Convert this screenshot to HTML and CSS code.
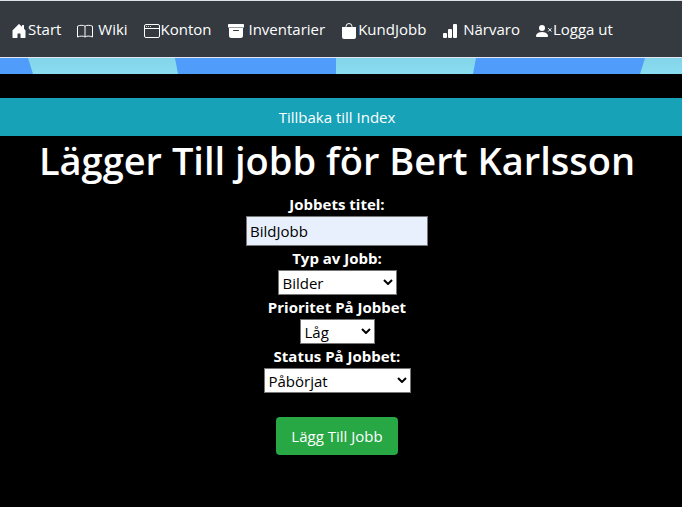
FILE: index.html
```html
<!DOCTYPE html>
<html lang="sv">
<head>
<meta charset="utf-8">
<meta name="viewport" content="width=device-width, initial-scale=1">
<title>Lägg till jobb</title>
<link rel="stylesheet" href="styles.css">
</head>
<body>
<nav class="navbar">
  <a class="nav-link" href="#"><svg class="icon" viewBox="0 0 16 16" aria-hidden="true"><path d="M6.5 14.5V11c0-.3.2-.5.5-.5h2c.3 0 .5.2.5.5v3.500c0 .3.2.5.5.5h4c.3 0 .5-.2.5-.5v-7a.5.500 0 0 0-.15-.35L13 5.800V2.500a.5.500 0 0 0-.5-.5h-1a.5.500 0 0 0-.5.500v1.300L8.350 1.150a.5.500 0 0 0-.7 0l-6 6a.5.500 0 0 0-.15.350v7c0 .3.200.500.500.500h4c.3 0 .5-.2.500-.5z"/></svg>Start</a>
  <a class="nav-link" href="#"><svg class="icon" viewBox="0 0 16 16" aria-hidden="true"><path class="line" d="M8 3.200C6.500 2 3 2 .5 3.200v10.800C3 12.800 6.500 12.800 8 14c1.500-1.200 5-1.200 7.500 0V3.200C13 2 9.500 2 8 3.200zV14"/></svg> Wiki</a>
  <a class="nav-link" href="#"><svg class="icon" viewBox="0 0 16 16" aria-hidden="true"><rect class="line" x=".5" y="1.500" width="15" height="13" rx="1.500"/><path class="line" d="M.5 5.500h15"/><circle cx="2.500" cy="3.500" r=".5"/><circle cx="4.500" cy="3.500" r=".5"/><circle cx="6.500" cy="3.500" r=".5"/></svg>Konton</a>
  <a class="nav-link" href="#"><svg class="icon" viewBox="0 0 16 16" aria-hidden="true"><path fill-rule="evenodd" d="M.8 1a.8.800 0 0 0-.8.800v2.400a.8.800 0 0 0 .8.800h14.400a.8.800 0 0 0 .8-.8V1.800a.8.800 0 0 0-.8-.8zM1 5v7.500A2.500 2.500 0 0 0 3.500 15h9a2.500 2.500 0 0 0 2.500-2.500V5zM5.500 7h5a.5.500 0 0 1 0 1h-5a.5.500 0 0 1 0-1z"/><path class="divider" d="M0 4.500h16"/></svg> Inventarier</a>
  <a class="nav-link" href="#"><svg class="icon" viewBox="0 0 16 16" aria-hidden="true"><path d="M1 4h14v10a2 2 0 0 1-2 2H3a2 2 0 0 1-2-2z"/><path class="line" d="M5 4v-.5a3 3 0 0 1 6 0V4"/></svg>KundJobb</a>
  <a class="nav-link" href="#"><svg class="icon" viewBox="0 0 16 16" aria-hidden="true"><rect x="1" y="10" width="4" height="5" rx="1"/><rect x="6" y="6" width="4" height="9" rx="1"/><rect x="11" y="1" width="4" height="14" rx="1"/></svg> Närvaro</a>
  <a class="nav-link" href="#"><svg class="icon" viewBox="0 0 16 16" aria-hidden="true"><circle cx="6" cy="5" r="3"/><path d="M1 14s-1 0-1-1 1-4 6-4 6 3 6 4-1 1-1 1z"/><path class="line" d="M12.200 5.200l3.300 3.300m0-3.300l-3.300 3.300"/></svg>Logga ut</a>
</nav>
<svg class="banner" viewBox="0 0 682 16" preserveAspectRatio="none" aria-hidden="true">
  <defs><linearGradient id="sky" x1="0" y1="0" x2="0" y2="1"><stop offset="0" stop-color="#83d4e8"/><stop offset="1" stop-color="#8adcf0"/></linearGradient></defs>
  <rect width="682" height="16" fill="url(#sky)"/>
  <path class="ray" d="M0 0h28l5 16H0zM175 0h161v16H178zM476 0h169l-5 16H473z"/>
</svg>
<main class="page">
  <a class="back" href="#">Tillbaka till Index</a>
  <h1 class="title">Lägger Till jobb för Bert Karlsson</h1>
  <form class="form">
    <label for="title">Jobbets titel:</label>
    <input class="field" id="title" type="text" value="BildJobb">
    <label for="type">Typ av Jobb:</label>
    <div class="picker"><select class="field type" id="type"><option>Bilder</option></select><svg class="chevron" viewBox="0 0 10 6" aria-hidden="true"><path d="M1 1l4 4 4-4"/></svg></div>
    <label for="priority">Prioritet På Jobbet</label>
    <div class="picker"><select class="field priority" id="priority"><option>Låg</option></select><svg class="chevron" viewBox="0 0 10 6" aria-hidden="true"><path d="M1 1l4 4 4-4"/></svg></div>
    <label for="status">Status På Jobbet:</label>
    <div class="picker"><select class="field status" id="status"><option>Påbörjat</option></select><svg class="chevron" viewBox="0 0 10 6" aria-hidden="true"><path d="M1 1l4 4 4-4"/></svg></div>
    <button class="submit" type="submit">Lägg Till Jobb</button>
  </form>
</main>
</body>
</html>
```
FILE: styles.css
```css
* { box-sizing: border-box; }
body {
  margin: 0;
  background: #000;
  color: #fff;
  font: 15px/24px "Open Sans", "Noto Sans", sans-serif;
}
.navbar {
  display: flex;
  gap: 16px;
  padding: 16px 11px;
  background: #343a40;
  border-top: 1px solid #dee2e6;
  border-bottom: 1px solid #e4e6f0;
}
.nav-link {
  color: #fff;
  text-decoration: none;
  white-space: nowrap;
}
.icon {
  width: 16px;
  height: 16px;
  margin-right: 1px;
  vertical-align: -4px;
  fill: #fff;
}
.line { fill: none; stroke: #fff; }
.divider { stroke: #9a9da0; }
.banner { display: block; width: 100%; height: 16px; }
.ray { fill: #509cfa; }
.page { padding-top: 24px; }
.back {
  display: block;
  padding: 7px 8px 7px 0;
  background: #17a2b8;
  color: #fff;
  text-align: center;
  text-decoration: none;
}
.title {
  margin: 0 8px 8px 0;
  font-size: 38px;
  font-weight: 600;
  line-height: 48px;
  text-align: center;
}
.form {
  display: flex;
  flex-direction: column;
  align-items: center;
  padding-right: 8px;
}
label { font-weight: 700; }
.field {
  appearance: none;
  margin: 0;
  border: 1px solid #767676;
  border-radius: 0;
  background: #fff;
  color: #000;
  font: inherit;
}
input.field {
  width: 182px;
  height: 30px;
  padding: 1px 3px;
  background: #e8f0fe;
}
select.field {
  display: block;
  height: 25px;
  padding: 0 4px;
  line-height: 22px;
}
.type { width: 119px; }
.priority { width: 75px; }
.status { width: 147px; }
.picker { position: relative; }
.chevron {
  position: absolute;
  top: 9px;
  right: 4px;
  width: 10px;
  height: 6px;
  fill: none;
  stroke: #000;
  stroke-width: 2;
  pointer-events: none;
}
.submit {
  margin-top: 24px;
  padding: 7px 15px;
  border: 0;
  border-radius: 4px;
  background: #28a745;
  color: #fff;
  font: inherit;
}
```
